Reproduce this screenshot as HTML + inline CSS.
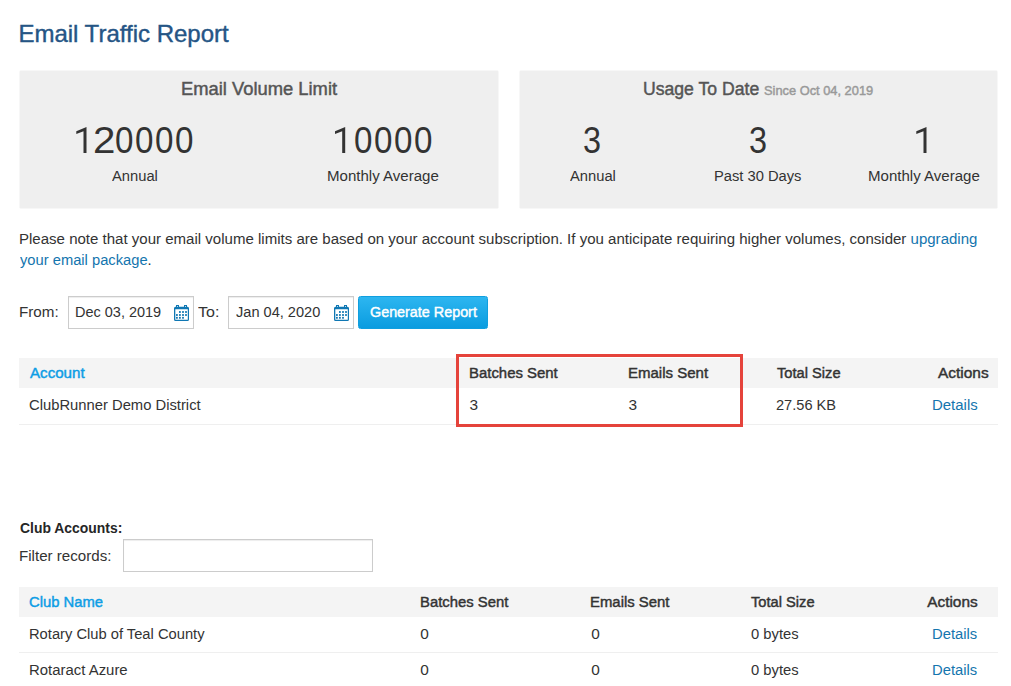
<!DOCTYPE html>
<html><head><meta charset="utf-8">
<style>
html,body{margin:0;padding:0;background:#fff;width:1011px;height:686px;overflow:hidden;position:relative;}
body{font-family:"Liberation Sans",sans-serif;color:#333;}
.a{position:absolute;white-space:nowrap;line-height:1;transform-origin:0 0;}
.inp{position:absolute;border:1px solid #cccccc;background:#fff;box-sizing:border-box;box-shadow:inset 0 1px 1px rgba(0,0,0,.075);}
.btn{position:absolute;left:358px;top:296px;width:130px;height:33px;border-radius:2.5px;background:linear-gradient(#2db6f0,#0a9ce0);box-sizing:border-box;border:1px solid #109fdf;}
.thead{position:absolute;left:19px;width:979px;height:30px;background:#f4f4f4;}
.hl{position:absolute;left:19px;width:979px;height:1px;background:#efefef;}
.red{position:absolute;left:456px;top:354px;width:287px;height:73px;box-sizing:border-box;border:3px solid #e5433b;}
</style></head><body>
<svg class="a" style="left:0;top:0" width="1011" height="220"><rect x="19.5" y="70.5" width="479" height="138" rx="1.2" fill="#efefef"/><rect x="519.5" y="70.5" width="478" height="138" rx="1.2" fill="#efefef"/></svg>
<div class="inp" style="left:68px;top:296px;width:126px;height:33px;"></div>
<div class="inp" style="left:228px;top:296px;width:126px;height:33px;"></div>
<svg class="a" style="left:174px;top:304px;" width="16" height="18" viewBox="0 0 16 18"><g fill="#0f77b3"><path d="M2 1.1h3v3h-3z M3 2v1.7h1v-1.7z" fill-rule="evenodd"/><path d="M10 1.1h3v3h-3z M11 2v1.7h1v-1.7z" fill-rule="evenodd"/><path fill-rule="evenodd" d="M1.5 2.7h12a1.5 1.5 0 0 1 1.5 1.5v11.3a1.5 1.5 0 0 1 -1.5 1.5h-12a1.5 1.5 0 0 1 -1.5 -1.5v-11.3a1.5 1.5 0 0 1 1.5 -1.5z M1.3 5.3v10.4h12.5v-10.4z"/><rect x="5" y="7.1" width="1.8" height="1.8"/><rect x="8.1" y="7.1" width="1.8" height="1.8"/><rect x="11.1" y="7.1" width="1.8" height="1.8"/><rect x="2" y="10.1" width="1.8" height="1.8"/><rect x="5" y="10.1" width="1.8" height="1.8"/><rect x="8.1" y="10.1" width="1.8" height="1.8"/><rect x="11.1" y="10.1" width="1.8" height="1.8"/><rect x="2" y="12.9" width="1.8" height="1.8"/><rect x="5" y="12.9" width="1.8" height="1.8"/><rect x="8.1" y="12.9" width="1.8" height="1.8"/></g></svg>
<svg class="a" style="left:334px;top:304px;" width="16" height="18" viewBox="0 0 16 18"><g fill="#0f77b3"><path d="M2 1.1h3v3h-3z M3 2v1.7h1v-1.7z" fill-rule="evenodd"/><path d="M10 1.1h3v3h-3z M11 2v1.7h1v-1.7z" fill-rule="evenodd"/><path fill-rule="evenodd" d="M1.5 2.7h12a1.5 1.5 0 0 1 1.5 1.5v11.3a1.5 1.5 0 0 1 -1.5 1.5h-12a1.5 1.5 0 0 1 -1.5 -1.5v-11.3a1.5 1.5 0 0 1 1.5 -1.5z M1.3 5.3v10.4h12.5v-10.4z"/><rect x="5" y="7.1" width="1.8" height="1.8"/><rect x="8.1" y="7.1" width="1.8" height="1.8"/><rect x="11.1" y="7.1" width="1.8" height="1.8"/><rect x="2" y="10.1" width="1.8" height="1.8"/><rect x="5" y="10.1" width="1.8" height="1.8"/><rect x="8.1" y="10.1" width="1.8" height="1.8"/><rect x="11.1" y="10.1" width="1.8" height="1.8"/><rect x="2" y="12.9" width="1.8" height="1.8"/><rect x="5" y="12.9" width="1.8" height="1.8"/><rect x="8.1" y="12.9" width="1.8" height="1.8"/></g></svg>
<div class="btn"></div>
<div class="thead" style="top:358px;"></div>
<div class="hl" style="top:424px;"></div>
<div class="inp" style="left:123px;top:539px;width:250px;height:33px;"></div>
<div class="thead" style="top:587px;"></div>
<div class="hl" style="top:652px;"></div>
<div class="a" style="left:18.39px;top:22px;font-size:24px;color:#255585;-webkit-text-stroke:0.4px currentColor;">Email Traffic Report</div>
<div class="a" style="left:180.98px;top:80px;font-size:18px;color:#555555;-webkit-text-stroke:0.45px currentColor;transform:scaleX(1.0197);">Email Volume Limit</div>
<div class="a" style="left:115.03px;top:123px;font-size:36px;color:#333333;transform:scaleX(0.9222);">0</div>
<div class="a" style="left:135.18px;top:123px;font-size:36px;color:#333333;transform:scaleX(0.9222);">0</div>
<div class="a" style="left:155.33px;top:123px;font-size:36px;color:#333333;transform:scaleX(0.9222);">0</div>
<div class="a" style="left:175.48px;top:123px;font-size:36px;color:#333333;transform:scaleX(0.9222);">0</div>
<div class="a" style="left:92.96px;top:123px;font-size:36px;color:#333333;transform:scaleX(1.1187);">2</div>
<div class="a" style="left:353.53px;top:123px;font-size:36px;color:#333333;transform:scaleX(0.9222);">0</div>
<div class="a" style="left:373.73px;top:123px;font-size:36px;color:#333333;transform:scaleX(0.9222);">0</div>
<div class="a" style="left:393.93px;top:123px;font-size:36px;color:#333333;transform:scaleX(0.9222);">0</div>
<div class="a" style="left:414.13px;top:123px;font-size:36px;color:#333333;transform:scaleX(0.9222);">0</div>
<div class="a" style="left:583.00px;top:123px;font-size:36px;color:#333333;transform:scaleX(0.9000);">3</div>
<div class="a" style="left:748.80px;top:123px;font-size:36px;color:#333333;transform:scaleX(0.9000);">3</div>
<div class="a" style="left:112.00px;top:168px;font-size:15.4px;color:#333333;transform:scaleX(0.9574);">Annual</div>
<div class="a" style="left:326.92px;top:168px;font-size:15.4px;color:#333333;transform:scaleX(0.9779);">Monthly Average</div>
<div class="a" style="left:643.12px;top:80px;font-size:18px;color:#555555;-webkit-text-stroke:0.45px currentColor;transform:scaleX(0.9786);">Usage To Date</div>
<div class="a" style="left:763.70px;top:84px;font-size:13px;color:#999999;-webkit-text-stroke:0.45px currentColor;transform:scaleX(0.9873);">Since Oct 04, 2019</div>
<div class="a" style="left:570.00px;top:168px;font-size:15.4px;color:#333333;transform:scaleX(0.9574);">Annual</div>
<div class="a" style="left:714.04px;top:168px;font-size:15.4px;color:#333333;transform:scaleX(0.9556);">Past 30 Days</div>
<div class="a" style="left:867.52px;top:168px;font-size:15.4px;color:#333333;transform:scaleX(0.9779);">Monthly Average</div>
<div class="a" style="left:18.82px;top:231px;font-size:15.4px;color:#333333;transform:scaleX(0.9767);">Please note that your email volume limits are based on your account subscription. If you anticipate requiring higher volumes, consider <span style="color:#1475ae">upgrading</span></div>
<div class="a" style="left:19.80px;top:252px;font-size:15.4px;color:#333333;transform:scaleX(0.9562);"><span style="color:#1475ae">your email package</span>.</div>
<div class="a" style="left:18.91px;top:304px;font-size:15.4px;color:#333333;transform:scaleX(0.9868);">From:</div>
<div class="a" style="left:74.56px;top:304px;font-size:15.4px;color:#333333;transform:scaleX(0.9411);">Dec 03, 2019</div>
<div class="a" style="left:197.80px;top:304px;font-size:15.4px;color:#333333;transform:scaleX(1.0421);">To:</div>
<div class="a" style="left:236.00px;top:304px;font-size:15.4px;color:#333333;transform:scaleX(0.9472);">Jan 04, 2020</div>
<div class="a" style="left:369.70px;top:304px;font-size:15.4px;color:#ffffff;-webkit-text-stroke:0.45px currentColor;transform:scaleX(0.9322);">Generate Report</div>
<div class="a" style="left:29.80px;top:365px;font-size:15.4px;color:#0d9de5;-webkit-text-stroke:0.45px currentColor;transform:scaleX(0.9821);">Account</div>
<div class="a" style="left:469.33px;top:365px;font-size:15.4px;color:#333333;-webkit-text-stroke:0.45px currentColor;transform:scaleX(0.9692);">Batches Sent</div>
<div class="a" style="left:628.22px;top:365px;font-size:15.4px;color:#333333;-webkit-text-stroke:0.45px currentColor;transform:scaleX(0.9753);">Emails Sent</div>
<div class="a" style="left:776.90px;top:365px;font-size:15.4px;color:#333333;-webkit-text-stroke:0.45px currentColor;transform:scaleX(0.9522);">Total Size</div>
<div class="a" style="left:937.50px;top:365px;font-size:15.4px;color:#333333;-webkit-text-stroke:0.45px currentColor;transform:scaleX(1.0040);">Actions</div>
<div class="a" style="left:28.54px;top:397px;font-size:15.4px;color:#333333;transform:scaleX(0.9601);">ClubRunner Demo District</div>
<div class="a" style="left:469.40px;top:397px;font-size:15.4px;color:#333333;">3</div>
<div class="a" style="left:628.60px;top:397px;font-size:15.4px;color:#333333;">3</div>
<div class="a" style="left:775.95px;top:397px;font-size:15.4px;color:#333333;transform:scaleX(0.9484);">27.56 KB</div>
<div class="a" style="left:932.03px;top:397px;font-size:15.4px;color:#1475ae;transform:scaleX(0.9717);">Details</div>
<div class="a" style="left:19.50px;top:520px;font-size:15.4px;color:#262626;font-weight:bold;transform:scaleX(0.9045);">Club Accounts:</div>
<div class="a" style="left:18.52px;top:548px;font-size:15.4px;color:#333333;transform:scaleX(0.9826);">Filter records:</div>
<div class="a" style="left:28.84px;top:594px;font-size:15.4px;color:#0d9de5;-webkit-text-stroke:0.45px currentColor;transform:scaleX(0.9605);">Club Name</div>
<div class="a" style="left:419.54px;top:594px;font-size:15.4px;color:#333333;-webkit-text-stroke:0.45px currentColor;transform:scaleX(0.9648);">Batches Sent</div>
<div class="a" style="left:590.43px;top:594px;font-size:15.4px;color:#333333;-webkit-text-stroke:0.45px currentColor;transform:scaleX(0.9679);">Emails Sent</div>
<div class="a" style="left:750.80px;top:594px;font-size:15.4px;color:#333333;-webkit-text-stroke:0.45px currentColor;transform:scaleX(0.9522);">Total Size</div>
<div class="a" style="left:927.20px;top:594px;font-size:15.4px;color:#333333;-webkit-text-stroke:0.45px currentColor;">Actions</div>
<div class="a" style="left:28.84px;top:626px;font-size:15.4px;color:#333333;transform:scaleX(0.9557);">Rotary Club of Teal County</div>
<div class="a" style="left:420.25px;top:626px;font-size:15.4px;color:#333333;">0</div>
<div class="a" style="left:591.15px;top:626px;font-size:15.4px;color:#333333;">0</div>
<div class="a" style="left:750.80px;top:626px;font-size:15.4px;color:#333333;transform:scaleX(0.9612);">0 bytes</div>
<div class="a" style="left:931.94px;top:626px;font-size:15.4px;color:#1475ae;transform:scaleX(0.9609);">Details</div>
<div class="a" style="left:28.83px;top:662px;font-size:15.4px;color:#333333;transform:scaleX(0.9690);">Rotaract Azure</div>
<div class="a" style="left:420.25px;top:662px;font-size:15.4px;color:#333333;">0</div>
<div class="a" style="left:591.15px;top:662px;font-size:15.4px;color:#333333;">0</div>
<div class="a" style="left:750.80px;top:662px;font-size:15.4px;color:#333333;transform:scaleX(0.9612);">0 bytes</div>
<div class="a" style="left:931.94px;top:662px;font-size:15.4px;color:#1475ae;transform:scaleX(0.9609);">Details</div>
<svg class="a" style="left:0;top:0" width="1011" height="220"><polygon points="86.5,127 76.3,131.3 76.3,134 83.5,131.2 83.5,153 86.5,153" fill="#333"/><polygon points="345.2,127 335.0,131.3 335.0,134 342.2,131.2 342.2,153 345.2,153" fill="#333"/><polygon points="926.5,127 916.3,131.3 916.3,134 923.5,131.2 923.5,153 926.5,153" fill="#333"/></svg>
<div class="red"></div>
</body></html>
